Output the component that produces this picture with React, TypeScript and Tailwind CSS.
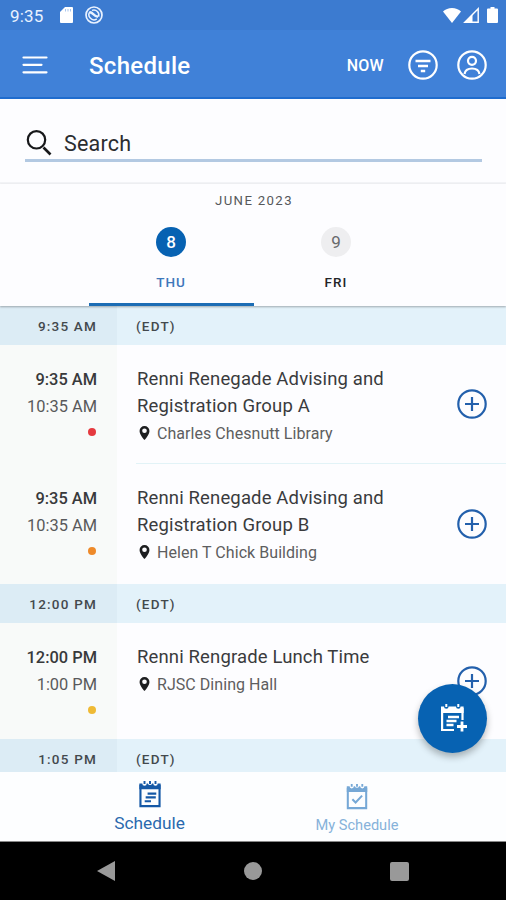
import { useState } from 'react';
import clsx from 'clsx';

interface Session {
  id: number;
  start: string;
  end: string;
  title: string;
  location: string;
  dotClass: string;
}

interface TimeBlock {
  label: string;
  sessions: Session[];
}

const BLOCKS: TimeBlock[] = [
  {
    label: '9:35 AM',
    sessions: [
      {
        id: 1,
        start: '9:35 AM',
        end: '10:35 AM',
        title: 'Renni Renegade Advising and Registration Group A',
        location: 'Charles Chesnutt Library',
        dotClass: 'bg-[#e53a3f]',
      },
      {
        id: 2,
        start: '9:35 AM',
        end: '10:35 AM',
        title: 'Renni Renegade Advising and Registration Group B',
        location: 'Helen T Chick Building',
        dotClass: 'bg-[#ee8a2a]',
      },
    ],
  },
  {
    label: '12:00 PM',
    sessions: [
      {
        id: 3,
        start: '12:00 PM',
        end: '1:00 PM',
        title: 'Renni Rengrade Lunch Time',
        location: 'RJSC Dining Hall',
        dotClass: 'bg-[#efba35]',
      },
    ],
  },
  { label: '1:05 PM', sessions: [] },
];

const DAYS = [
  { date: 8, name: 'THU' },
  { date: 9, name: 'FRI' },
];

function StatusBar() {
  return (
    <div className="flex h-[30px] items-center bg-[#3c7bd0] pr-2 pl-[10px] text-white">
      <span className="pt-[1px] text-[17px] leading-7 tracking-[0.2px] text-[#e9f2ff]">9:35</span>
      <svg className="ml-4 h-4 w-[13px]" viewBox="0 0 13 16" fill="currentColor">
        <path d="M5 0h7a1 1 0 0 1 1 1v14a1 1 0 0 1-1 1H1a1 1 0 0 1-1-1V5z" />
        <path d="M5.500 2v2.500M8 2v2.500M10.500 2v2.500" stroke="#a9c6ee" strokeWidth="1" />
      </svg>
      <svg className="ml-3 h-[18px] w-[18px]" viewBox="0 0 18 18" fill="none" stroke="#e9f2ff">
        <circle cx="9" cy="9" r="8" strokeWidth="1.700" />
        <path d="M5.200 5.500a5 5 0 0 0 6.600 7.400M7 4.400a5 5 0 0 1 6.500 6.400" strokeWidth="1.500" />
        <path d="M5 6.200c3 .2 3.500 3.800 8 4.600" strokeWidth="2.400" />
      </svg>
      <svg className="ml-auto h-[15px] w-[18px]" viewBox="0 0 18 15" fill="currentColor">
        <path d="M0 3.500C2.300 1.200 5.500 0 9 0s6.700 1.200 9 3.500L9 15z" />
      </svg>
      <svg className="ml-[2px] h-4 w-4" viewBox="0 0 16 16">
        <path d="M1.800 15.200L15.200 1.800v13.400z" fill="none" stroke="currentColor" strokeWidth="1.400" />
        <path d="M1 16L9.500 7.500V16z" fill="currentColor" />
      </svg>
      <svg className="ml-2 h-4 w-[11px]" viewBox="0 0 11 16" fill="currentColor">
        <path d="M3.500 0h4v1.600H10a1 1 0 0 1 1 1V15a1 1 0 0 1-1 1H1a1 1 0 0 1-1-1V2.600a1 1 0 0 1 1-1h2.500z" />
      </svg>
    </div>
  );
}

function AppBar() {
  return (
    <header className="flex h-[69px] items-center border-b-2 border-[#1f6cce] bg-[#4081d8] pt-[2px] pr-[19px] pl-[22px] text-white">
      <svg className="h-5 w-[26px]" viewBox="0 0 26 20" stroke="currentColor" strokeWidth="2.200" strokeLinecap="round">
        <path d="M1.500 2.500h23M1.500 9.800h18M1.500 17.300h23" />
      </svg>
      <h1 className="ml-[41px] pt-[2px] text-[24px] leading-8 font-medium tracking-[0.300px]">Schedule</h1>
      <button className="ml-auto pt-[2px] text-[16px] font-medium tracking-[0.300px]">NOW</button>
      <svg className="ml-6 h-[30px] w-[30px]" viewBox="0 0 30 30" fill="none" stroke="currentColor" strokeWidth="2.200">
        <circle cx="15" cy="15" r="13.700" />
        <path d="M7.500 11h15M10 16h10M12.800 21h4.400" strokeWidth="2.400" />
      </svg>
      <svg className="ml-[19px] h-[30px] w-[30px]" viewBox="0 0 30 30" fill="none" stroke="currentColor" strokeWidth="2.200">
        <circle cx="15" cy="15" r="13.700" />
        <circle cx="15" cy="10.800" r="4" />
        <path d="M7.500 24c.6-3.600 3.800-5.500 7.500-5.500s6.900 1.900 7.500 5.500" />
      </svg>
    </header>
  );
}

function SearchBar() {
  return (
    <div className="h-[85px] border-b-2 border-[#f2f3f6] pt-[26px] pr-6 pl-[25px]">
      <div className="flex h-[37px] items-center border-b-[3px] border-[#b3c9e2] pt-[2px]">
        <svg className="ml-[1px] h-[26px] w-[26px]" viewBox="0 0 26 26" fill="none" stroke="#17181a" strokeWidth="2.200">
          <circle cx="10.500" cy="9.800" r="8.700" />
          <path d="M17.500 17.500l7 7" strokeWidth="2.600" />
        </svg>
        <span className="ml-3 pt-[2px] text-[21.500px] tracking-[0.200px] text-[#2b2d30]">Search</span>
      </div>
    </div>
  );
}

function DayTabs({ selected, onSelect }: { selected: number; onSelect: (date: number) => void }) {
  return (
    <div className="relative z-10 h-[122px] bg-[#fdfdff] shadow-[0_1px_2px_rgba(0,0,0,0.3)]">
      <div className="pt-[7px] pl-[2px] text-center text-[13.200px] leading-5 tracking-[1.350px] text-[#56585b]">JUNE 2023</div>
      <div className="flex justify-center pl-[1px]">
        {DAYS.map((day) => {
          const active = day.date === selected;
          return (
            <button
              key={day.date}
              onClick={() => onSelect(day.date)}
              className={clsx(
                'flex h-[95px] w-[165px] flex-col items-center border-b-[3px] pt-4',
                active ? 'border-[#1c6db5]' : 'border-transparent'
              )}
            >
              <span
                className={clsx(
                  'flex h-[30px] w-[30px] items-center justify-center rounded-full pt-[1px] text-[17px]',
                  active ? 'bg-[#0762b2] font-medium text-white' : 'bg-[#eeeef0] text-[#68696c]'
                )}
              >
                {day.date}
              </span>
              <span
                className={clsx(
                  'mt-[15px] text-[13.500px] leading-5 font-medium tracking-[1px]',
                  active ? 'text-[#3e78bb]' : 'text-[#242528]'
                )}
              >
                {day.name}
              </span>
            </button>
          );
        })}
      </div>
    </div>
  );
}

function BlockHeader({ label }: { label: string }) {
  return (
    <div className="flex h-[39px] shrink-0 items-center bg-[#e3f2fa] text-[13.500px] font-medium tracking-[1.200px] text-[#43494d]">
      <div className="flex h-full w-[117px] items-center justify-end bg-[#dcecf5] pt-[1px] pr-5">{label}</div>
      <div className="pt-[1px] pl-[19px]">(EDT)</div>
    </div>
  );
}

function SessionRow({ session, last }: { session: Session; last: boolean }) {
  return (
    <div className="flex min-h-[116px] shrink-0">
      <div className="flex w-[117px] flex-col items-end bg-[#f8faf9] pt-[21px] pr-5 text-[16.400px] leading-[27px]">
        <span className="font-medium text-[#38393b]">{session.start}</span>
        <span className="text-[#58595b]">{session.end}</span>
        <span className={clsx('mt-2 mr-[1px] h-2 w-2 rounded-full', session.dotClass)} />
      </div>
      <div className="flex flex-1 pl-[19px]">
        <div className={clsx('flex flex-1 items-center justify-between pr-[19px]', !last && 'border-b border-[#e2f3f7]')}>
          <div className={clsx('w-[290px] self-start pt-[21px]', last ? 'pb-[17px]' : 'pb-[15px]')}>
            <h2 className="pl-[1px] text-[18.500px] leading-[27px] tracking-[0.140px] text-[#3a3b3d]">{session.title}</h2>
            <div className="flex items-center pl-[3px]">
              <svg className="mb-[2px] h-[14px] w-[11px]" viewBox="0 0 11 15" fill="#1d1e20" fillRule="evenodd">
                <path d="M5.500 0A5.300 5.300 0 0 0 .2 5.300C.2 9.200 5.500 15 5.500 15s5.300-5.800 5.300-9.700A5.300 5.300 0 0 0 5.500 0zm0 2.600a2.500 2.500 0 1 1 0 5 2.500 2.500 0 0 1 0-5z" />
              </svg>
              <span className="ml-[7px] text-[16px] leading-[28px] tracking-[0.050px] text-[#5d5e60]">{session.location}</span>
            </div>
          </div>
          <button className="h-[30px] w-[30px]">
            <svg viewBox="0 0 30 30" fill="none" stroke="#2360ac" strokeWidth="2.200">
              <circle cx="15" cy="15" r="13.700" />
              <path d="M15 8v14M8 15h14" />
            </svg>
          </button>
        </div>
      </div>
    </div>
  );
}

// torn-off calendar page shared by the nav tabs
function CalendarPage({ children, className }: { children: React.ReactNode; className?: string }) {
  return (
    <svg className={className} viewBox="0 0 24 28" fill="none" stroke="currentColor" strokeWidth="2.200">
      <path d="M2.100 4v22h19.800V4" />
      <path
        d="M1 2.500h3a2.300 2.300 0 0 0 4.600 0h1.200a2.300 2.300 0 0 0 4.400 0h1.200a2.300 2.300 0 0 0 4.600 0h3V8.500H1z"
        fill="currentColor"
        stroke="none"
      />
      <path d="M6.300 0v3M12 0v3M17.700 0v3" strokeWidth="2" />
      {children}
    </svg>
  );
}

function BottomNav() {
  return (
    <nav className="flex h-[70px] border-b border-[#888] bg-[#fdfeff] pr-[46px] pl-[46px]">
      <button className="flex w-[207px] flex-col items-center pt-[9px] text-[#1458a6]">
        <CalendarPage className="h-[27px] w-[24px]">
          <path d="M9.500 13h9M7.500 17h10.500M6.500 21h6.500" strokeWidth="2.300" />
        </CalendarPage>
        <span className="mt-[3px] text-[17.300px] leading-6 text-[#2a69ae]">Schedule</span>
      </button>
      <button className="flex w-[207px] flex-col items-center pt-3 pl-[1px] text-[#76a8d6]">
        <CalendarPage className="h-[26px] w-[24px]">
          <path d="M7 16.500l3.500 3.500 7-7.500" />
        </CalendarPage>
        <span className="mt-1 text-[14.600px] leading-[22px] text-[#86b2da]">My Schedule</span>
      </button>
    </nav>
  );
}

function SystemNav() {
  return (
    <div className="flex h-[58px] items-center justify-between bg-black px-[97px] text-[#999]">
      <svg className="h-5 w-[18px]" viewBox="0 0 18 20" fill="currentColor">
        <path d="M18 0v20L0 10z" />
      </svg>
      <span className="h-[18px] w-[18px] rounded-full bg-[#999]" />
      <span className="h-[19px] w-[19px] rounded-[2px] bg-[#999]" />
    </div>
  );
}

export default function App() {
  const [selectedDay, setSelectedDay] = useState(8);

  return (
    <div className="relative flex h-[900px] w-[506px] flex-col overflow-hidden bg-[#fdfdff] font-['Roboto',sans-serif]">
      <StatusBar />
      <AppBar />
      <SearchBar />
      <DayTabs selected={selectedDay} onSelect={setSelectedDay} />
      <main className="flex min-h-0 flex-1 flex-col overflow-hidden">
        {BLOCKS.map((block) => (
          <section key={block.label}>
            <BlockHeader label={block.label} />
            {block.sessions.map((session, i) => (
              <SessionRow key={session.id} session={session} last={i === block.sessions.length - 1} />
            ))}
          </section>
        ))}
      </main>
      <BottomNav />
      <SystemNav />
      <button className="absolute top-[684px] left-[418px] flex h-[69px] w-[69px] items-center justify-center rounded-full bg-[#0762b2] text-white shadow-[0_4px_7px_rgba(0,0,0,0.28)]">
        <svg className="mb-[2px] ml-[3px] h-[28px] w-[28px]" viewBox="0 0 28 28" fill="none" stroke="currentColor" strokeWidth="2.200">
          <path d="M2.100 4v22H14M22.500 4v12" />
          <path
            d="M1 2.500h3a2.300 2.300 0 0 0 4.600 0h7.400a2.300 2.300 0 0 0 4.600 0h3V9H1z"
            fill="currentColor"
            stroke="none"
          />
          <path d="M6.300 0v3M18.300 0v3" strokeWidth="2" />
          <path d="M8 13h11M6.500 17h10M6.500 21h7" strokeWidth="2.300" />
          <path d="M22 17.500v10M17 22.500h10" strokeWidth="2.800" />
        </svg>
      </button>
    </div>
  );
}
